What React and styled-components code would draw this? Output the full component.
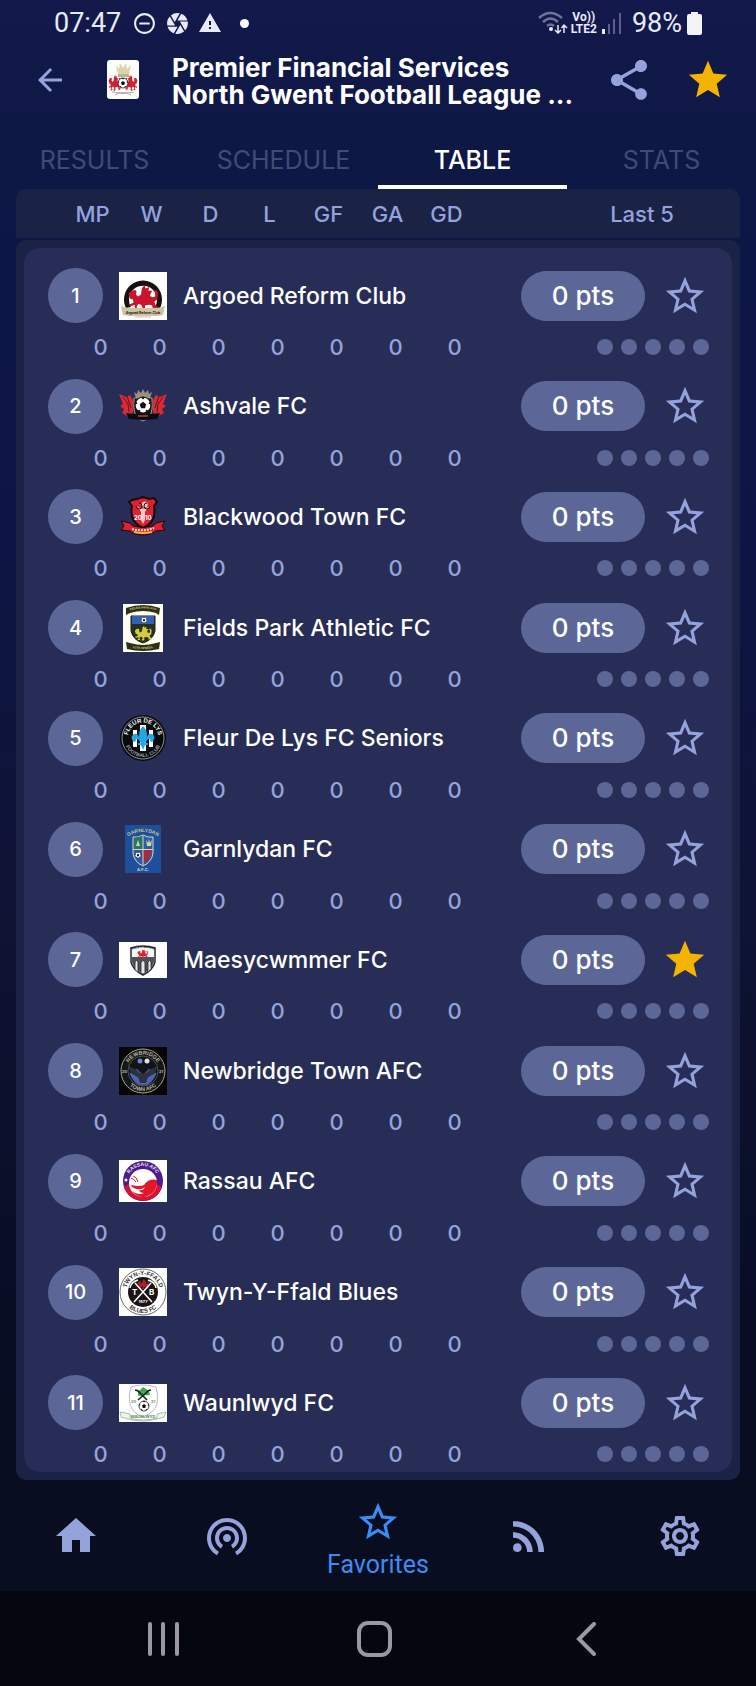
import React, { useState } from "react";
import styled, { createGlobalStyle } from "styled-components";
import {
  MdArrowBack,
  MdCamera,
  MdHome,
  MdOutlineSettings,
  MdRemoveCircleOutline,
  MdRssFeed,
  MdShare,
  MdStar,
  MdStarBorder,
  MdWarning,
  MdWifiTethering,
} from "react-icons/md";

const GlobalStyle = createGlobalStyle`
  * {
    box-sizing: border-box;
  }
  body {
    margin: 0;
    background: #080d20;
  }
  button {
    padding: 0;
    border: 0;
    background: none;
    color: inherit;
    font: inherit;
    cursor: pointer;
  }
  svg {
    display: block;
  }
`;

const Screen = styled.div`
  display: flex;
  flex-direction: column;
  min-height: 100vh;
  color: #fff;
  font-family: Inter, "Open Sans", sans-serif;
  background: linear-gradient(#13194b 0, #0e1845 8%, #0c1545 30%, #0f1334 55%, #080d24 78%, #080d20 90%);
`;

/* status bar */
const StatusBar = styled.div`
  display: flex;
  align-items: center;
  height: 48px;
  padding: 0 54px 2px 54px;
  color: #e8eafa;
  font-family: Roboto, sans-serif;
  font-size: 27px;
  line-height: 32px;
`;
const Notifications = styled.div`
  display: flex;
  align-items: center;
  gap: 8px;
  flex: 1;
  padding-left: 11px;
`;
const StatusDot = styled.span`
  width: 9px;
  height: 9px;
  margin-left: 10px;
  border-radius: 50%;
  background: #fff;
`;
const Network = styled.div`
  display: flex;
  flex-direction: column;
  margin: 0 5px 0 3px;
  font-size: 12px;
  font-weight: 700;
  line-height: 12px;
  text-align: center;
`;
const Battery = styled.span`
  padding: 0 5px 0 11px;
`;

/* header */
const Header = styled.header`
  display: flex;
  align-items: center;
  gap: 33px;
  height: 63px;
  padding: 0 24px 0 26px;
`;
const IconButton = styled.button`
  display: flex;
  align-items: center;
  justify-content: center;
  width: 48px;
  height: 48px;
  flex: none;
  color: ${(props) => (props.$active ? "#f5b301" : "#95a3dc")};
`;
const Title = styled.h1`
  flex: 1;
  min-width: 0;
  margin: 0;
  padding-top: 2px;
  font-size: 26px;
  font-weight: 700;
  line-height: 27px;
  white-space: nowrap;
`;
const Actions = styled.div`
  display: flex;
  gap: 31px;
`;

const Tabs = styled.nav`
  display: flex;
  margin-top: 24px;
`;
const Tab = styled.button`
  flex: 1;
  height: 54px;
  border-bottom: 4px solid ${(props) => (props.$active ? "#fff" : "transparent")};
  color: ${(props) => (props.$active ? "#fff" : "#414a78")};
  font-size: 25px;
  font-weight: ${(props) => (props.$active ? 500 : 400)};
`;

/* league table */
const Table = styled.table`
  display: flex;
  flex-direction: column;
  flex: 1;
  gap: 2px;
  margin: 0 16px;
`;
const TableHead = styled.thead`
  display: block;
  border-radius: 10px 10px 0 0;
  background: #1a2246;
  color: #95a3dc;
`;
const HeadRow = styled.tr`
  display: flex;
  align-items: center;
  height: 49px;
  padding: 0 42px 0 47px;
`;
const HeadCell = styled.th`
  width: ${(props) => (props.$wide ? "112px" : "59px")};
  margin-left: ${(props) => (props.$wide ? "auto" : "0")};
  padding: 0;
  font-size: 22px;
  font-weight: 500;
  text-align: center;
`;
const TableBody = styled.tbody`
  display: flex;
  flex-direction: column;
  flex: 1;
  padding: 8px;
  border-radius: 10px;
  background: #1a2246;
`;
// the team takes a full line, its stats wrap to the next one
const TeamRow = styled.tr`
  display: flex;
  flex: 1;
  flex-wrap: wrap;
  align-content: flex-start;
  padding: 20px 23px 0 24px;
  background: #272d56;

  &:first-child {
    border-radius: 16px 16px 0 0;
  }
  &:last-child {
    padding-bottom: 6px;
    border-radius: 0 0 16px 16px;
  }
`;
const TeamCell = styled.th`
  display: flex;
  flex: 0 0 100%;
  align-items: center;
  gap: 16px;
  padding: 0;
  text-align: left;
`;
const Rank = styled.span`
  display: flex;
  align-items: center;
  justify-content: center;
  width: 55px;
  height: 55px;
  border-radius: 50%;
  background: #5c6797;
  font-size: 20px;
  font-weight: 500;
`;
const TeamName = styled.span`
  flex: 1;
  font-size: 23px;
  font-weight: 500;
`;
const Points = styled.span`
  width: 124px;
  border-radius: 25px;
  background: #5c6797;
  font-size: 26px;
  font-weight: 500;
  line-height: 50px;
  text-align: center;
`;
const Stat = styled.td`
  width: 59px;
  padding: 13px 0 0;
  color: #95a3dc;
  font-size: 22px;
  font-weight: 500;
  line-height: 22px;
  text-align: center;

  &:nth-child(2) {
    margin-left: 23px;
  }
`;
const Form = styled.td`
  display: flex;
  align-items: center;
  gap: 8px;
  margin-left: auto;
  padding: 13px 0 0;
`;
const FormDot = styled.i`
  width: 16px;
  height: 16px;
  border-radius: 50%;
  background: #5c6797;
`;

/* bottom bars */
const BottomNav = styled.nav`
  display: flex;
  height: 111px;
  background: #080d20;
`;
const NavLink = styled.a`
  display: flex;
  flex: 1;
  flex-direction: column;
  align-items: center;
  justify-content: center;
  gap: 4px;
  padding-top: ${(props) => (props.$active ? "8px" : "0")};
  color: ${(props) => (props.$active ? "#3b8df5" : "#95a3dc")};
  font-family: Roboto, sans-serif;
  font-size: 25px;
  line-height: 32px;
  text-decoration: none;
`;
const SystemBar = styled.div`
  display: flex;
  height: 95px;
  padding: 0 65px 0 58px;
  background: #04070f;
`;
const SystemButton = styled.button`
  display: flex;
  flex: 1;
  align-items: center;
  justify-content: center;
`;

const ArcText = ({ id, d, fill, size, children }) => (
  <>
    <path id={id} d={d} fill="none" />
    <text fill={fill} fontSize={size} fontWeight="700" fontFamily="Liberation Sans, sans-serif" textAnchor="middle">
      <textPath href={`#${id}`} startOffset="50%">
        {children}
      </textPath>
    </text>
  </>
);

// small football used in several crests
const Ball = ({ x, y, r }) => (
  <g transform={`translate(${x} ${y}) scale(${r / 10})`}>
    <circle r="10" fill="#fff" stroke="#111" strokeWidth="1.5" />
    <path
      d="M0-4l4 3-1.500 5h-5L-4-1zM-3-10h6L0-7zM9-5l1 5-3-2zM-9-5l-1 5 3-2zM7 7L3 9.500 4 6zM-7 7l4 2.500L-4 6z"
      fill="#111"
    />
  </g>
);

const dragon =
  "M2 9l4-4 5-1 2 2-1 4 3 3 4-3 1-8 4-5 1 5 5-2-1 5h5l-2 4-1 3 4 2 3-1V7l-3-2 5-1 2 4-1 9-4 3 2 5 3 2-1 3h-6l-1-5-4-1-6 1 1 5-2 2h-5l1-3 2-1-2-4-4-1-2 4 2 3-2 1H8l1-2 2-1-1-4-5 2-3-3h3l4-2-1-4-4-1z";

const Crest = styled.svg`
  width: 48px;
  height: 48px;
  flex: none;
`;

const crests = {
  league: (
    <>
      <rect width="32" height="39" rx="3" fill="#fdfdfd" />
      <path d="M9 5l3 4 1-6 3 5 3-5 1 6 4-4-2 9H11z" fill="#ddd3a6" />
      <path d="M11 14h11v3H11z" fill="#b8b59a" />
      <path d={dragon} fill="#d3202e" transform="translate(1 16) scale(.3 .46)" />
      <path d={dragon} fill="#d3202e" transform="translate(31 16) scale(-.3 .46)" />
      <Ball x={16} y={23} r={5} />
      <path d="M5 32q11 3 22 0M8 35q8-5 16 0" fill="none" stroke="#aaa" />
    </>
  ),
  argoed: (
    <>
      <rect width="48" height="48" fill="#fff" />
      <path d="M7 36a19 19 0 1134 0l-5-1a14 14 0 10-24 0z" fill="#14110f" />
      <path d={dragon} fill="#c9152b" transform="translate(8 15) scale(.74)" />
      <path d="M2 34l7 2h30l7-2-2 9-6 1H10l-6-1z" fill="#cfc3a0" />
      <text x="24" y="42" fontSize="3.500" fontWeight="700" textAnchor="middle" fill="#222">
        Argoed Reform Club
      </text>
      <path d="M16 45h16" stroke="#e2b9a0" />
    </>
  ),
  ashvale: (
    <>
      <path
        d="M0 12l7 3 4-2 3 5v12l-4 5-7-4 2-4-4-3 3-2zM48 12l-7 3-4-2-3 5v12l4 5 7-4-2-4 4-3-3-2z"
        fill="#d92b34"
      />
      <path d="M4 15l5 7 1 8M44 15l-5 7-1 8M8 14l4 12M40 14l-4 12" stroke="#5e1420" fill="none" />
      <path d="M15 10l3 2 1-4 3 3 2-4 2 4 3-3 1 4 3-2-2 6H17z" fill="#99917f" />
      <path d="M15 16h18v11q-1 9-9 12-8-3-9-12z" fill="#111" stroke="#aaa291" />
      <Ball x={24} y={23} r={8} />
      <path d="M7 31l8 1h18l8-1-3 6-14 1-14-1z" fill="#0c0b0d" />
      <path d="M19 34h10" stroke="#9a2a33" strokeWidth="2" />
    </>
  ),
  blackwood: (
    <>
      <path d="M13 7l5-1 6-2 6 2 5-1 3 4-3 4q3 16-11 22Q10 29 13 13l-3-4z" fill="#e0202e" stroke="#16090d" strokeWidth="2" />
      <path d="M24 9a3 3 0 110 5 3 3 0 010-5zM18 13q6 5 12 0l-4 6v8l-2 4-2-4v-8z" fill="#f1c9c6" />
      <path d="M17 13a3 3 0 103-3M31 13a3 3 0 11-3-3" stroke="#111" fill="none" />
      <text x="15" y="27" fontSize="6" fill="#fff">20</text>
      <text x="26" y="27" fontSize="6" fill="#fff">10</text>
      <path d="M2 28l9 2 3 3q10 3 20 0l3-3 9-2-3 5 3 4-9 1-3 2q-10 4-20 0l-3-2-9-1 3-4z" fill="#e0202e" stroke="#16090d" />
      <path d="M13 36q11 3 22-1" stroke="#fbe0d8" strokeWidth="2" strokeDasharray="2 1" fill="none" />
      <path d="M15 39q9 2 18 0" stroke="#e9b83e" strokeWidth="2" fill="none" />
    </>
  ),
  fields: (
    <>
      <rect x="4" width="40" height="48" fill="#fdfdf3" />
      <path d="M7 4q17-6 34 0l-1 7-3-2q-13-4-26 0l-4 2z" fill="#2c3016" />
      <path d="M12 12h24v15q-2 9-12 12-10-3-12-12z" fill="#26301e" stroke="#222" />
      <path d="M13 12h22v8H13z" fill="#2f62b4" />
      <Ball x={25} y={16} r={3} />
      <path d={dragon} fill="#d3cc35" transform="translate(15 23) scale(.42)" />
      <path d="M7 38l4 1q13 4 26 0l4-1-1 7q-16 4-32 0z" fill="#2c3016" />
      <ArcText id="fields-top" d="M9 7q15-5 30 0" fill="#d9d77c" size="3">
        FIELDS PARK ATH
      </ArcText>
      <ArcText id="fields-low" d="M9 43q15 4 30 0" fill="#d9d77c" size="3">
        LLYS CENEDL
      </ArcText>
    </>
  ),
  fleur: (
    <>
      <circle cx="24" cy="24" r="23" fill="#0a0a0c" />
      <circle cx="24" cy="24" r="21" fill="none" stroke="#8a949b" />
      <circle cx="24" cy="24" r="13" fill="#111" />
      <path d="M14 16h4v17h-4zM21 11h6v26h-6zM30 16h4v17h-4z" fill="#fff" />
      <path
        d="M24 12q6 6 3 13 2-6 6-5 5 3 0 8l-2-1q1-3-2-2l-3 4h3v2h-3l-2 5-2-5h-3v-2h3l-3-4q-3-1-2 2l-2 1q-5-5 0-8 4-1 6 5-3-7 3-13z"
        fill="#23a6e6"
      />
      <ArcText id="fleur-top" d="M8.500 24a15.500 15.500 0 0131 0" fill="#fff" size="6">
        FLEUR DE LYS
      </ArcText>
      <ArcText id="fleur-low" d="M5 24a19 19 0 0038 0" fill="#9aa0a6" size="5">
        FOOTBALL CLUB
      </ArcText>
    </>
  ),
  garnlydan: (
    <>
      <rect x="6" width="36" height="48" fill="#1d4f9a" />
      <path d="M14 12q5 1 10-2 5 3 10 2v16q-1 9-10 13-9-4-10-13z" fill="#2a5cab" stroke="#d8d8c0" />
      <path d="M15 13l9-2v13h-9z" fill="#27746a" />
      <path d="M24 25h9q0 8-9 14z" fill="#a32b3c" />
      <path d="M24 11v29M14 24.500h20" stroke="#d8d8c0" />
      <path d="M17 21l2-6 2 6zM27 15l2 3 1-4 1 4 2-3-1 6h-4z" fill="#d7d98e" />
      <Ball x={19} y={30} r={3} />
      <ArcText id="garn-top" d="M8 12q16-10 32 0" fill="#c6c98c" size="5">
        GARNLYDAN
      </ArcText>
      <text x="24" y="46" fontSize="4" textAnchor="middle" fill="#d5d7bd">A.F.C.</text>
    </>
  ),
  maesycwmmer: (
    <>
      <rect y="6" width="48" height="36" fill="#fff" />
      <path d="M12 12q12-4 24 0v14q-2 8-12 13-10-5-12-13z" fill="#f4f4f4" stroke="#26292c" strokeWidth="1.500" />
      <path d="M13 21h22v5q-2 7-11 12-9-5-11-12z" fill="#4b5356" />
      <path d="M16 33v-7q1.500-3 3 0v10M22 37V26q2-3 4 0v11M29 36V26q1.500-3 3 0v6" fill="#e8e8e8" stroke="#222" strokeWidth=".8" />
      <path d={dragon} fill="#d8232f" transform="translate(18 14) scale(.26)" />
      <ArcText id="maes-top" d="M8 15q16-6 32 0" fill="#222" size="3">
        MAESYCWMMER
      </ArcText>
    </>
  ),
  newbridge: (
    <>
      <rect width="48" height="48" fill="#060607" />
      <circle cx="24" cy="24" r="22" fill="#15181a" stroke="#a9a78c" />
      <circle cx="24" cy="24" r="15" fill="#111317" stroke="#7b7c6c" strokeWidth=".6" />
      <path d="M9 16q3 17 15 22Q36 33 39 16q-3 7-10 6l-5 5-5-5q-7 1-10-6z" fill="#2b3140" />
      <path d="M11 26q3 9 10 12l-2-7zM37 26q-3 9-10 12l2-7zM17 22l4 4M31 22l-4 4M20 36q4 4 8 0" fill="#4d64b5" stroke="#4d64b5" />
      <circle cx="21" cy="14" r="2.500" fill="#6b86cf" />
      <circle cx="28" cy="14" r="2.500" fill="#dfe2df" />
      <ArcText id="newb-top" d="M7.500 24a16.500 16.500 0 0133 0" fill="#b9b79b" size="5.500">
        NEWBRIDGE
      </ArcText>
      <ArcText id="newb-low" d="M4 24a20 20 0 0040 0" fill="#b9b79b" size="5.500">
        TOWN AFC
      </ArcText>
      <text x="3" y="26" fontSize="4" fill="#b9b79b">20</text>
      <text x="40" y="26" fontSize="4" fill="#b9b79b">21</text>
    </>
  ),
  rassau: (
    <>
      <rect y="3" width="48" height="42" fill="#fff" />
      <circle cx="24" cy="24" r="20" fill="#4d1c8c" />
      <path d="M5 30a20 20 0 0038 0l-6-3-26-1z" fill="#d81232" />
      <circle cx="24" cy="26" r="14" fill="#fff" />
      <path d="M38 23q1 13-12 17-8 1-13-6 6 5 12 2-4 0-5-3 4 1 6-3-3 3-8 2-5-1-6-4 9 2 13 0 5-7 13-5z" fill="#e2172b" />
      <path d="M12 21q3 1 5 4M14 19q4 1 5 6" stroke="#e2172b" fill="none" />
      <circle cx="7" cy="23" r="1.500" fill="#fff" />
      <ArcText id="rass-top" d="M8.500 24a15.500 15 0 0131 0" fill="#e8e0f2" size="5">
        RASSAU AFC
      </ArcText>
    </>
  ),
  twyn: (
    <>
      <rect width="48" height="48" fill="#fff" />
      <circle cx="24" cy="24" r="23" fill="#fff" stroke="#444" strokeWidth=".8" />
      <circle cx="24" cy="24" r="15" fill="#1a1514" />
      <path d={dragon} fill="#b3202b" transform="translate(18 12) scale(.28)" />
      <path d="M16 15l17 19M32 15L15 34M11 20q1-6 8-8M37 20q-1-6-8-8" stroke="#fff" strokeWidth="1.500" fill="none" />
      <text x="13" y="27" fontSize="8" fill="#fff">T</text>
      <text x="30" y="27" fontSize="8" fill="#fff">B</text>
      <text x="24" y="35" fontSize="4" textAnchor="middle" fill="#fff">1877</text>
      <ArcText id="twyn-top" d="M7 24a17 17 0 0134 0" fill="#333" size="6">
        TWYN-Y-FFALD
      </ArcText>
      <ArcText id="twyn-low" d="M3 24a21 21 0 0042 0" fill="#333" size="6">
        BLUES FC
      </ArcText>
    </>
  ),
  waunlwyd: (
    <>
      <rect y="5" width="48" height="38" fill="#fff" />
      <path d="M12 8q12-4 25 0 3 8 1 17-3 9-14 13-11-4-13-13-2-9 1-17z" fill="none" stroke="#bdb8c9" />
      <path d="M19 13l5-5 6 4 1 4-12 1z" fill="#43a752" />
      <path d="M16 11q3 0 5 3l7 7M32 11q-3 0-5 3l-8 7" stroke="#16221b" strokeWidth="1.500" fill="none" />
      <text x="12" y="24" fontSize="4" fill="#58a367">20</text>
      <text x="32" y="24" fontSize="4" fill="#58a367">21</text>
      <Ball x={25} y={27} r={5} />
      <path d="M1 33l10 2v4q13 4 27 0v-4l9-2-2 5-7 2q-14 4-29 0l-7-2z" fill="#eef5ee" stroke="#9aac9e" strokeWidth=".8" />
      <text x="24" y="39" fontSize="4" textAnchor="middle" fill="#3f8f50">WAUNLWYD</text>
    </>
  ),
};

const columns = ["MP", "W", "D", "L", "GF", "GA", "GD"];
const tabs = ["RESULTS", "SCHEDULE", "TABLE", "STATS"];

const teams = [
  { name: "Argoed Reform Club", crest: "argoed" },
  { name: "Ashvale FC", crest: "ashvale" },
  { name: "Blackwood Town FC", crest: "blackwood" },
  { name: "Fields Park Athletic FC", crest: "fields" },
  { name: "Fleur De Lys FC Seniors", crest: "fleur" },
  { name: "Garnlydan FC", crest: "garnlydan" },
  { name: "Maesycwmmer FC", crest: "maesycwmmer" },
  { name: "Newbridge Town AFC", crest: "newbridge" },
  { name: "Rassau AFC", crest: "rassau" },
  { name: "Twyn-Y-Ffald Blues", crest: "twyn" },
  { name: "Waunlwyd FC", crest: "waunlwyd" },
];

const navItems = [
  { label: "Home", Icon: MdHome },
  { label: "Live", Icon: MdWifiTethering },
  { label: "Favorites", Icon: MdStarBorder },
  { label: "News", Icon: MdRssFeed },
  { label: "Settings", Icon: MdOutlineSettings },
];

const Status = () => (
  <StatusBar>
    <span>07:47</span>
    <Notifications>
      <MdRemoveCircleOutline size={25} />
      <MdCamera size={25} />
      <MdWarning size={24} />
      <StatusDot />
    </Notifications>
    <svg width="30" height="24" viewBox="0 0 30 24" fill="none">
      <path d="M1 7q11-10 23 0M5 11q7.500-7 15 0M9 15q3.500-3 7 0" stroke="#6d7299" strokeWidth="2.500" />
      <circle cx="13" cy="18" r="2" fill="#e8eafa" />
      <path d="M20 14v8M17 19l3 3 3-3M26 22v-8M23.500 17l2.500-3 3 3" stroke="#e8eafa" strokeWidth="1.500" />
    </svg>
    <Network>
      <span>Vo))</span>
      <span>LTE2</span>
    </Network>
    <svg width="19" height="22" viewBox="0 0 19 22">
      <path d="M0 17h3v5H0z" fill="#e8eafa" />
      <path d="M6 12h2v10H6zM11 7h2v15h-2zM17 1h2v21h-2z" fill="#5a5f8c" />
    </svg>
    <Battery>98%</Battery>
    <svg width="15" height="23" viewBox="0 0 15 23">
      <path d="M4 0h7v2h2q2 0 2 2v17q0 2-2 2H2q-2 0-2-2V4q0-2 2-2h2z" fill="#f2f2f7" />
    </svg>
  </StatusBar>
);

const Team = ({ team, rank, favorite, onToggle }) => (
  <TeamRow>
    <TeamCell scope="row">
      <Rank>{rank}</Rank>
      <Crest viewBox="0 0 48 48">{crests[team.crest]}</Crest>
      <TeamName>{team.name}</TeamName>
      <Points>0 pts</Points>
      <IconButton $active={favorite} aria-label={`Favorite ${team.name}`} onClick={onToggle}>
        {favorite ? <MdStar size={46} /> : <MdStarBorder size={46} />}
      </IconButton>
    </TeamCell>
    {columns.map((column) => (
      <Stat key={column}>0</Stat>
    ))}
    <Form>
      {[1, 2, 3, 4, 5].map((game) => (
        <FormDot key={game} />
      ))}
    </Form>
  </TeamRow>
);

const App = () => {
  const [tab, setTab] = useState("TABLE");
  const [favorites, setFavorites] = useState(["Maesycwmmer FC"]);

  const toggleFavorite = (name) => {
    setFavorites(favorites.includes(name) ? favorites.filter((item) => item !== name) : [...favorites, name]);
  };

  return (
    <Screen>
      <GlobalStyle />
      <Status />
      <Header>
        <IconButton aria-label="Back">
          <MdArrowBack size={36} />
        </IconButton>
        <svg width="32" height="39" viewBox="0 0 32 39">
          {crests.league}
        </svg>
        <Title>
          Premier Financial Services
          <br />
          North Gwent Football League ...
        </Title>
        <Actions>
          <IconButton aria-label="Share">
            <MdShare size={48} />
          </IconButton>
          <IconButton $active aria-label="Favorite league">
            <MdStar size={46} />
          </IconButton>
        </Actions>
      </Header>
      <Tabs>
        {tabs.map((name) => (
          <Tab key={name} $active={name === tab} onClick={() => setTab(name)}>
            {name}
          </Tab>
        ))}
      </Tabs>
      <Table>
        <TableHead>
          <HeadRow>
            {columns.map((column) => (
              <HeadCell key={column}>{column}</HeadCell>
            ))}
            <HeadCell $wide>Last 5</HeadCell>
          </HeadRow>
        </TableHead>
        <TableBody>
          {teams.map((team, index) => (
            <Team
              key={team.name}
              team={team}
              rank={index + 1}
              favorite={favorites.includes(team.name)}
              onToggle={() => toggleFavorite(team.name)}
            />
          ))}
        </TableBody>
      </Table>
      <BottomNav>
        {navItems.map(({ label, Icon }) => (
          <NavLink key={label} href={`#${label.toLowerCase()}`} aria-label={label} $active={label === "Favorites"}>
            <Icon size={label === "Favorites" ? 46 : 48} />
            {label === "Favorites" && label}
          </NavLink>
        ))}
      </BottomNav>
      <SystemBar>
        <SystemButton aria-label="Recent apps">
          <svg width="32" height="34" viewBox="0 0 32 34" stroke="#9b989f" strokeWidth="4" strokeLinecap="round">
            <path d="M2 2v30M15 2v30M29 2v30" />
          </svg>
        </SystemButton>
        <SystemButton aria-label="Home screen">
          <svg width="35" height="36" viewBox="0 0 35 36" fill="none" stroke="#9b989f" strokeWidth="4">
            <rect x="2" y="2" width="31" height="32" rx="9" />
          </svg>
        </SystemButton>
        <SystemButton aria-label="System back">
          <svg width="20" height="34" viewBox="0 0 20 34" fill="none" stroke="#9b989f" strokeWidth="4" strokeLinecap="round">
            <path d="M18 2L3 17l15 15" />
          </svg>
        </SystemButton>
      </SystemBar>
    </Screen>
  );
};

export default App;
